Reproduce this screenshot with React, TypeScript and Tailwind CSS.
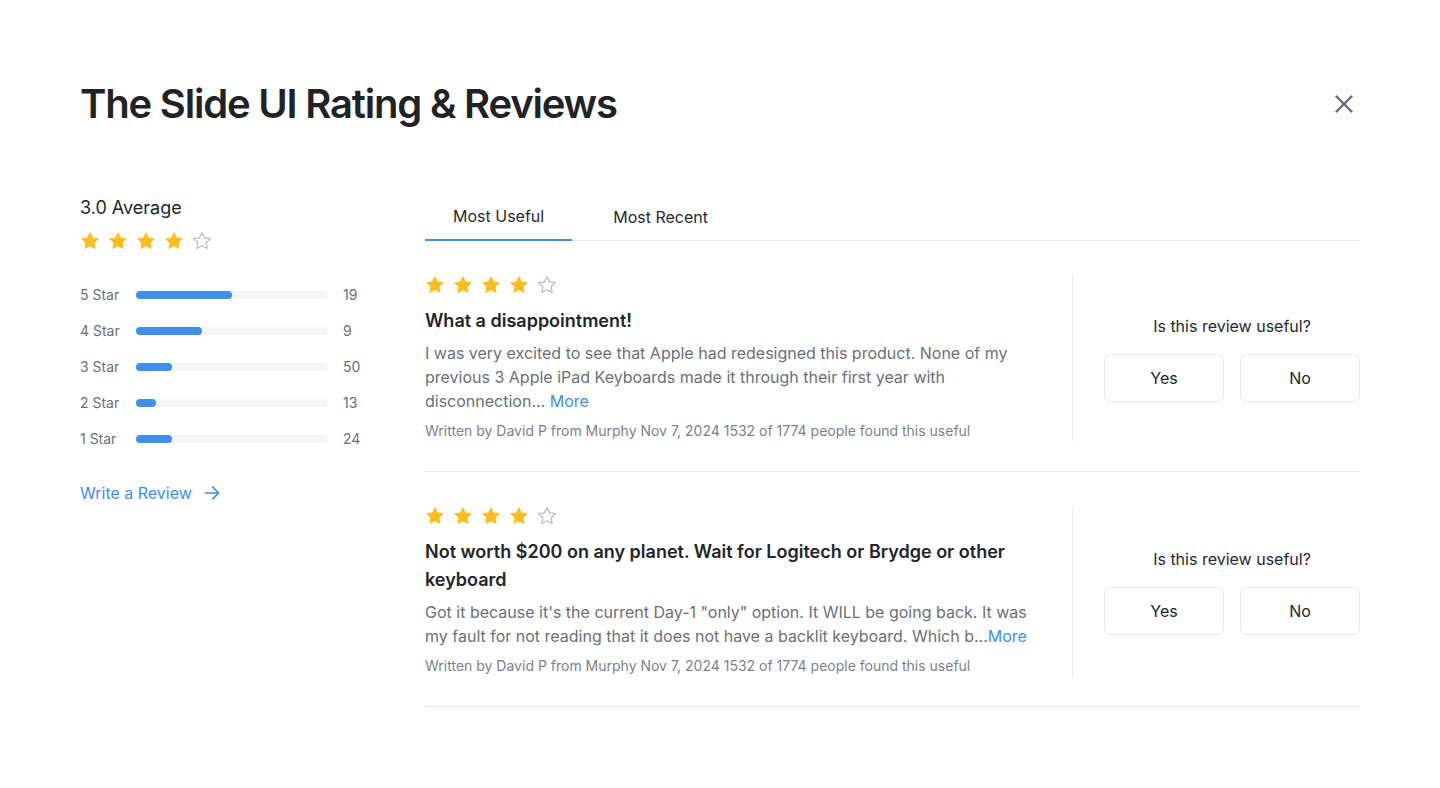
import React from "react";

const STAR = "M12 2l3.09 6.26L22 9.27l-5 4.87 1.18 6.88L12 17.77l-6.18 3.25L7 14.14 2 9.27l6.91-1.01L12 2z";

const Stars = ({ count }: { count: number }) => (
  <div className="flex items-center gap-2">
    {[0, 1, 2, 3, 4].map((i) =>
      i < count ? (
        <svg key={i} width="20" height="20" viewBox="0 0 24 24">
          <path d={STAR} fill="#FBBD1E" stroke="#FBBD1E" strokeWidth="1" strokeLinejoin="round" />
        </svg>
      ) : (
        <svg key={i} width="20" height="20" viewBox="0 0 24 24">
          <path d={STAR} fill="none" stroke="#b9bcc2" strokeWidth="1.5" strokeLinejoin="round" />
        </svg>
      )
    )}
  </div>
);

const breakdown = [
  { label: "5 Star", fill: 96, count: 19 },
  { label: "4 Star", fill: 66, count: 9 },
  { label: "3 Star", fill: 36, count: 50 },
  { label: "2 Star", fill: 20, count: 13 },
  { label: "1 Star", fill: 36, count: 24 },
];

const reviews = [
  {
    title: "What a disappointment!",
    body: "I was very excited to see that Apple had redesigned this product. None of my previous 3 Apple iPad Keyboards made it through their first year with disconnection... ",
  },
  {
    title: "Not worth $200 on any planet. Wait for Logitech or Brydge or other keyboard",
    body: "Got it because it's the current Day-1 \"only\" option. It WILL be going back. It was my fault for not reading that it does not have a backlit keyboard. Which b...",
  },
];

export default function App() {
  return (
    <div className="min-h-screen bg-white px-20 pt-20 font-['Inter',sans-serif] text-[#222529]">
      <div className="flex items-center justify-between">
        <h1 className="text-[40px] leading-[48px] font-semibold tracking-[-0.03em] text-[#1f2327]">
          The Slide UI Rating &amp; Reviews
        </h1>
        <button className="w-8 h-8 flex items-center justify-center">
          <svg width="18" height="18" viewBox="0 0 18 18">
            <path d="M1.5 1.5L16.5 16.5M16.5 1.5L1.5 16.5" stroke="#676b7b" strokeWidth="2.4" strokeLinecap="round" />
          </svg>
        </button>
      </div>

      <div className="flex mt-[64px]">
        <div className="w-[345px] shrink-0 pt-[2px]">
          <div className="text-lg leading-7 text-[#222529]">3.0 Average</div>
          <div className="mt-[9px]">
            <Stars count={4} />
          </div>
          <div className="mt-[34px] flex flex-col gap-4">
            {breakdown.map((b) => (
              <div key={b.label} className="flex items-center h-5">
                <span className="w-14 text-sm text-[#6b6f76]">{b.label}</span>
                <div className="w-[192px] h-2 rounded-full bg-[#f4f5f7]">
                  <div className="h-2 rounded-full bg-[#3d8fea]" style={{ width: b.fill }} />
                </div>
                <span className="ml-[15px] text-sm text-[#6b6f76]">{b.count}</span>
              </div>
            ))}
          </div>
          <a className="mt-8 flex items-center gap-2.5 text-base leading-6 text-[#3d8fea]">
            Write a Review
            <svg width="20" height="20" viewBox="0 0 24 24" fill="none" stroke="#3d8fea" strokeWidth="2" strokeLinecap="round" strokeLinejoin="round">
              <path d="M4 12h16M13 5l7 7-7 7" />
            </svg>
          </a>
        </div>

        <div className="flex-1">
          <div className="flex border-b border-[#e6e8eb]">
            <button className="px-7 pt-3 pb-[11px] text-base leading-6 text-[#26292e] border-b-2 border-[#3d8fea] -mb-px">
              Most Useful
            </button>
            <button className="ml-[13px] px-7 pt-3 pb-[11px] text-base leading-6 text-[#26292e]">Most Recent</button>
          </div>

          {reviews.map((r, i) => (
            <div key={i} className="flex pt-[34px] pb-[30px] border-b border-[#e6e8eb]">
              <div className="flex-1 pr-8">
                <Stars count={4} />
                <h3 className="mt-[12px] text-lg leading-7 font-semibold text-[#222529]">{r.title}</h3>
                <p className="mt-[6px] text-base leading-6 text-[#6b6f76]">
                  {r.body}
                  <span className="text-[#3d8fea]">More</span>
                </p>
                <p className="mt-2 text-sm leading-5 text-[#7d8189]">
                  Written by David P from Murphy Nov 7, 2024 1532 of 1774 people found this useful
                </p>
              </div>
              <div className="w-[288px] border-l border-[#e9eaed] pl-[31px] flex flex-col justify-center">
                <div className="text-center text-base leading-6 text-[#26292e]">Is this review useful?</div>
                <div className="mt-4 flex gap-4">
                  <button className="w-[120px] h-12 rounded-md border border-[#e6e8eb] text-base text-[#222529]">Yes</button>
                  <button className="w-[120px] h-12 rounded-md border border-[#e6e8eb] text-base text-[#222529]">No</button>
                </div>
              </div>
            </div>
          ))}
        </div>
      </div>
    </div>
  );
}
